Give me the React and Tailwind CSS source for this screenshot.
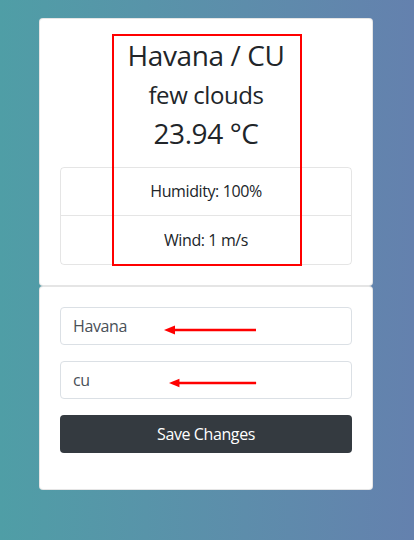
import React from "react";

const font = { fontFamily: '"Open Sans", "Noto Sans", "Liberation Sans", sans-serif' };

function Arrow({ className }) {
  return (
    <svg className={className} width="94" height="10" viewBox="0 0 94 10">
      <line x1="8" y1="5" x2="92" y2="5" stroke="#ff0000" strokeWidth="2.5" />
      <polygon points="0,5 11,0.5 11,9.5" fill="#ff0000" />
    </svg>
  );
}

export default function App() {
  return (
    <div
      className="relative min-h-[540px] w-full bg-gradient-to-r from-[#4f9ea6] to-[#6481ae] pt-[18px] pl-[39px] tracking-tight text-[#212529]"
      style={font}
    >
      <div className="w-[334px]">
        <div className="rounded-[4px] border border-black/[0.1] bg-white p-5 text-center">
          <h3 className="mb-2 text-[28px] leading-[33.6px]">Havana / CU</h3>
          <h4 className="mb-2 text-[24px] leading-[28.8px]">few clouds</h4>
          <h3 className="mb-4 text-[28px] leading-[33.6px]">23.94 °C</h3>
          <ul className="rounded-[4px] border border-black/[0.1] text-[16px]">
            <li className="flex h-[48px] items-center justify-center border-b border-black/[0.1]">
              Humidity: 100%
            </li>
            <li className="flex h-[48px] items-center justify-center">Wind: 1 m/s</li>
          </ul>
        </div>
        <div className="rounded-[4px] border border-black/[0.1] bg-white p-5">
          <div className="mb-4 flex h-[38px] items-center rounded-[4px] border border-[#dbe0e5] px-3 text-[16px] text-[#495057]">
            Havana
          </div>
          <div className="mb-4 flex h-[38px] items-center rounded-[4px] border border-[#dbe0e5] px-3 text-[16px] text-[#495057]">
            cu
          </div>
          <button className="mb-4 flex h-[38px] w-full items-center justify-center rounded-[4px] bg-[#343a40] text-[16px] text-white">
            Save Changes
          </button>
        </div>
      </div>

      <div className="pointer-events-none absolute left-[112px] top-[34px] h-[232px] w-[190px] border-2 border-[#ff0000]" />
      <Arrow className="absolute left-[164px] top-[325px]" />
      <Arrow className="absolute left-[169px] top-[378px] w-[89px]" />
    </div>
  );
}
